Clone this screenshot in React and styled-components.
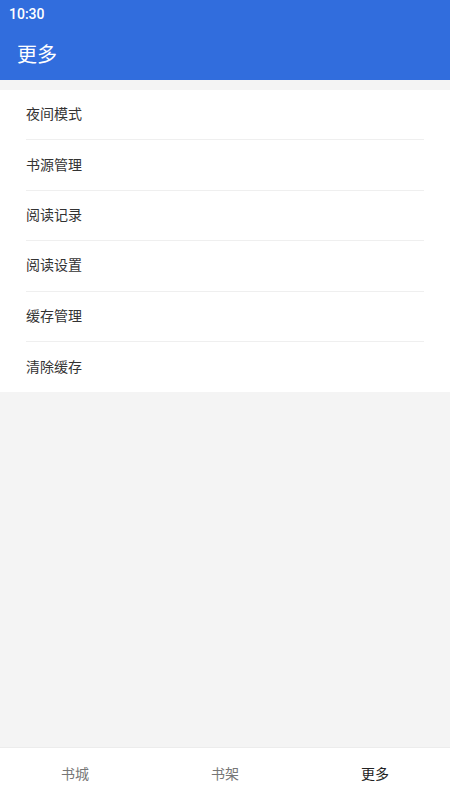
import React, { useState } from "react";
import styled, { createGlobalStyle } from "styled-components";

const menu = ["夜间模式", "书源管理", "阅读记录", "阅读设置", "缓存管理", "清除缓存"];
const tabs = ["书城", "书架", "更多"];

const GlobalStyle = createGlobalStyle`
  html, body, #root {
    margin: 0;
    padding: 0;
    height: 100%;
  }
  body {
    font-family: Roboto, "Noto Sans CJK SC", sans-serif;
    background: #f4f4f4;
  }
`;

const Page = styled.div`
  height: 800px;
  display: flex;
  flex-direction: column;
  background: #f4f4f4;
`;

const Top = styled.div`
  background: #316ddd;
  color: #fff;
  height: 80px;
  display: flex;
  flex-direction: column;
`;

const StatusBar = styled.div`
  height: 27px;
  padding: 0 9px;
  display: flex;
  align-items: center;
  font-size: 14px;
  font-weight: 500;
`;

const Title = styled.div`
  flex: 1;
  display: flex;
  align-items: center;
  padding: 0 17px;
  font-size: 20px;
`;

const List = styled.div`
  margin-top: 10px;
  background: #fff;
`;

const Item = styled.div`
  height: 50.4px;
  box-sizing: border-box;
  margin: 0 26px;
  padding-bottom: 3px;
  display: flex;
  align-items: center;
  font-size: 14px;
  color: #333;
  border-bottom: ${(p) => (p.last ? "none" : "1px solid #efefef")};
  cursor: pointer;
`;

const Spacer = styled.div`
  flex: 1;
`;

const TabBar = styled.div`
  height: 52px;
  background: #fff;
  display: flex;
  border-top: 1px solid #ececec;
`;

const Tab = styled.div`
  flex: 1;
  display: flex;
  align-items: center;
  justify-content: center;
  padding-bottom: 2px;
  font-size: 14px;
  color: ${(p) => (p.active ? "#222" : "#777")};
  cursor: pointer;
`;

export default function App() {
  const [active, setActive] = useState(2);

  return (
    <Page>
      <GlobalStyle />
      <Top>
        <StatusBar>10:30</StatusBar>
        <Title>更多</Title>
      </Top>
      <List>
        {menu.map((name, idx) => (
          <Item key={name} last={idx === menu.length - 1}>
            {name}
          </Item>
        ))}
      </List>
      <Spacer />
      <TabBar>
        {tabs.map((t, idx) => (
          <Tab key={t} active={idx === active} onClick={() => setActive(idx)}>
            {t}
          </Tab>
        ))}
      </TabBar>
    </Page>
  );
}
